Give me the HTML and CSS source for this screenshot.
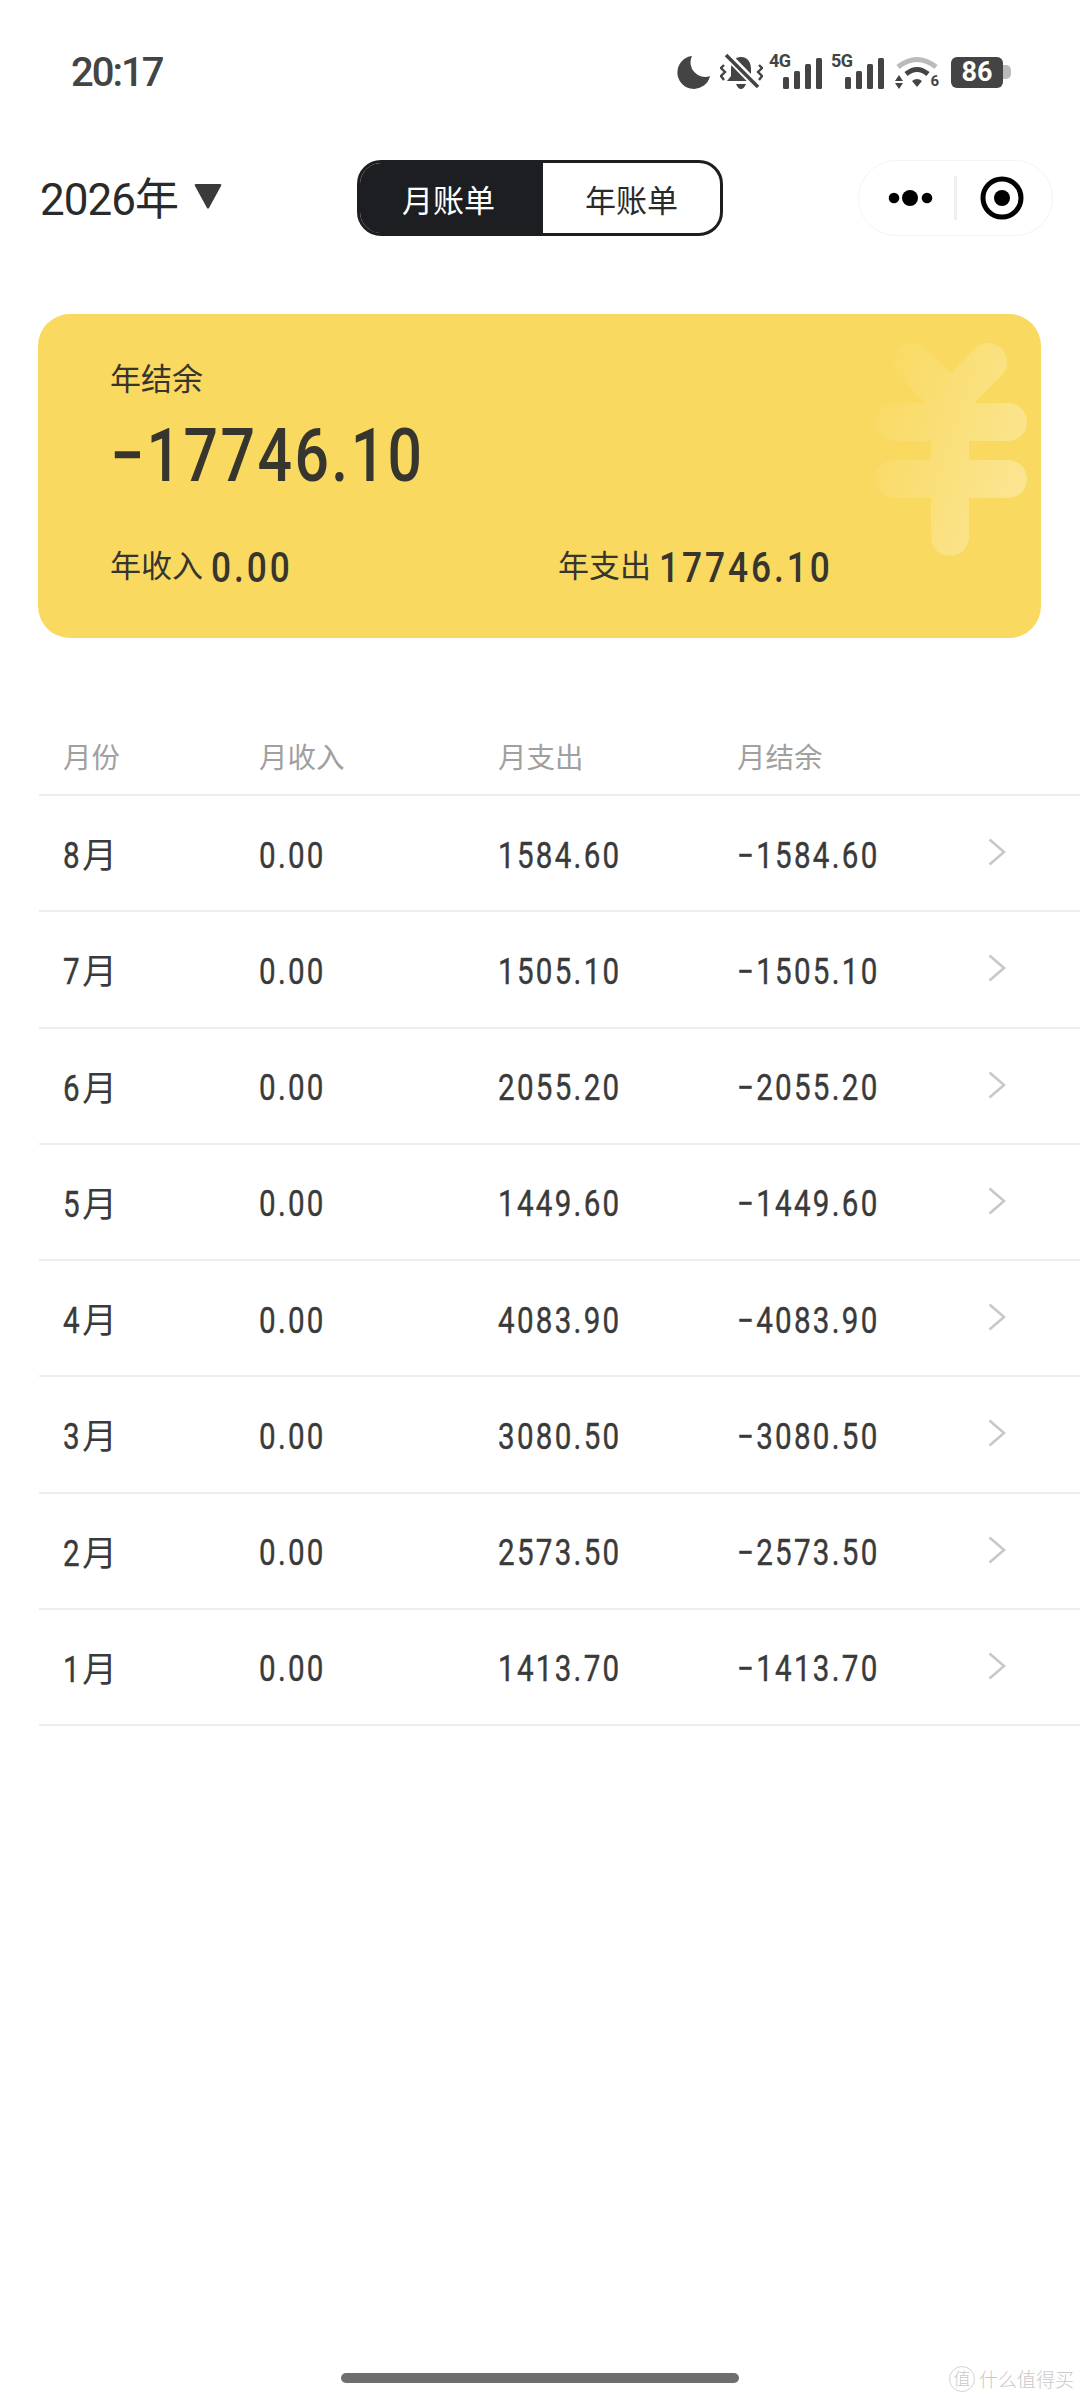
FILE: index.html
```html
<!DOCTYPE html>
<html lang="zh-CN">
<head>
    <meta charset="UTF-8">
    <meta name="viewport" content="width=device-width, initial-scale=1.0">
    <title>年账单</title>
    <link rel="stylesheet" href="styles.css">
</head>
<body>
<div class="page">

    <div class="status">
        <span class="time">20:17</span>
        <div class="status-icons">
            <svg class="ic-moon" width="33" height="33" viewBox="0 0 33 33"><path d="M15 0 A16.5 16.5 0 1 0 33 20 A14.5 14.5 0 0 1 15 0Z" fill="#444"/></svg>
            <svg class="ic-bell" width="43" height="36" viewBox="0 0 43 36">
                <path d="M21 3C14 3 11 9 11 15V22L7 27H35L31 22V15C31 9 28 3 21 3Z" fill="#444"/>
                <path d="M16 30H26Q24 35 21 35Q18 35 16 30Z" fill="#444"/>
                <path d="M5 -1L39 34" stroke="#fff" stroke-width="8"/>
                <path d="M6 1L38 33" stroke="#444" stroke-width="3.5"/>
                <path d="M4 11L1 14L5 18L1 22L4 26M39 11L42 14L38 18L42 22L39 26" fill="none" stroke="#444" stroke-width="2.4"/>
            </svg>
            <div class="signal">
                <span class="net">4G</span>
                <svg width="54" height="36" viewBox="0 0 54 36">
                    <rect x="14" y="23" width="6" height="12" rx="1.5"/>
                    <rect x="25" y="17" width="6" height="18" rx="1.5"/>
                    <rect x="36" y="10" width="6" height="25" rx="1.5"/>
                    <rect x="47" y="4" width="6" height="31" rx="1.5"/>
                </svg>
            </div>
            <div class="signal">
                <span class="net">5G</span>
                <svg width="54" height="36" viewBox="0 0 54 36">
                    <rect x="14" y="23" width="6" height="12" rx="1.5"/>
                    <rect x="25" y="17" width="6" height="18" rx="1.5"/>
                    <rect x="36" y="10" width="6" height="25" rx="1.5"/>
                    <rect x="47" y="4" width="6" height="31" rx="1.5"/>
                </svg>
            </div>
            <div class="wifi">
                <svg width="44" height="33" viewBox="0 0 44 33">
                    <path d="M3 11Q22 -4 41 11" fill="none" stroke="#bbb" stroke-width="5"/>
                    <path d="M11 18Q22 9 33 18" fill="none" stroke="#444" stroke-width="5"/>
                    <path d="M17 25Q22 21 27 25L22 31Z" fill="#444"/>
                    <path d="M0 25L4 19L8 25ZM0 27L4 33L8 27Z" fill="#444"/>
                </svg>
                <span class="wifi-num">6</span>
            </div>
            <div class="battery">
                <span class="battery-body">86</span>
                <span class="battery-cap"></span>
            </div>
        </div>
    </div>

    <div class="nav">
        <div class="year">
            <span>2026年</span>
            <svg width="28" height="25" viewBox="0 0 28 25"><path d="M1 2Q0 0 2 0H26Q28 0 27 2L15 24Q14 25 13 24Z" fill="#3b3a3a"/></svg>
        </div>
        <div class="tabs">
            <div class="tab tab-on">月账单</div>
            <div class="tab">年账单</div>
        </div>
        <div class="capsule">
            <svg width="46" height="20" viewBox="0 0 46 20">
                <circle cx="6" cy="10" r="5.3"/><circle cx="22" cy="10" r="8"/><circle cx="39" cy="10" r="5.3"/>
            </svg>
            <span class="capsule-line"></span>
            <svg class="capsule-target" width="44" height="44" viewBox="0 0 44 44">
                <circle cx="22" cy="22" r="19" fill="none" stroke="#000" stroke-width="5"/>
                <circle cx="22" cy="22" r="8"/>
            </svg>
        </div>
    </div>

    <div class="card">
        <svg class="card-yen" width="1003" height="324" viewBox="38 314 1003 324">
            <defs>
                <linearGradient id="yenfade" gradientUnits="userSpaceOnUse" x1="870" y1="420" x2="1020" y2="470">
                    <stop offset="0" stop-color="#fff" stop-opacity="0.03"/>
                    <stop offset="1" stop-color="#fff" stop-opacity="0.3"/>
                </linearGradient>
            </defs>
            <path d="M912 362L950 400L988 362M950 400V537M894 422H1008M894 479H1008" fill="none" stroke="url(#yenfade)" stroke-width="38" stroke-linecap="round" stroke-linejoin="round"/>
        </svg>
        <div class="card-label">年结余</div>
        <div class="card-amount num">−17746.10</div>
        <div class="card-stats">
            <div class="stat"><span class="stat-name">年收入</span><span class="stat-value num">0.00</span></div>
            <div class="stat"><span class="stat-name">年支出</span><span class="stat-value num">17746.10</span></div>
        </div>
    </div>

    <div class="bills">
        <div class="bill-row bill-head">
            <span>月份</span><span>月收入</span><span>月支出</span><span>月结余</span>
        </div>
        <div class="bill-row">
            <span class="month"><b class="num">8</b>月</span><span class="num">0.00</span><span class="num">1584.60</span><span class="num">−1584.60</span>
            <svg class="arrow" width="18" height="28" viewBox="0 0 18 28"><path d="M1.5 1.5L16 14L1.5 26.500"/></svg>
        </div>
        <div class="bill-row">
            <span class="month"><b class="num">7</b>月</span><span class="num">0.00</span><span class="num">1505.10</span><span class="num">−1505.10</span>
            <svg class="arrow" width="18" height="28" viewBox="0 0 18 28"><path d="M1.5 1.5L16 14L1.5 26.500"/></svg>
        </div>
        <div class="bill-row">
            <span class="month"><b class="num">6</b>月</span><span class="num">0.00</span><span class="num">2055.20</span><span class="num">−2055.20</span>
            <svg class="arrow" width="18" height="28" viewBox="0 0 18 28"><path d="M1.5 1.5L16 14L1.5 26.500"/></svg>
        </div>
        <div class="bill-row">
            <span class="month"><b class="num">5</b>月</span><span class="num">0.00</span><span class="num">1449.60</span><span class="num">−1449.60</span>
            <svg class="arrow" width="18" height="28" viewBox="0 0 18 28"><path d="M1.5 1.5L16 14L1.5 26.500"/></svg>
        </div>
        <div class="bill-row">
            <span class="month"><b class="num">4</b>月</span><span class="num">0.00</span><span class="num">4083.90</span><span class="num">−4083.90</span>
            <svg class="arrow" width="18" height="28" viewBox="0 0 18 28"><path d="M1.5 1.5L16 14L1.5 26.500"/></svg>
        </div>
        <div class="bill-row">
            <span class="month"><b class="num">3</b>月</span><span class="num">0.00</span><span class="num">3080.50</span><span class="num">−3080.50</span>
            <svg class="arrow" width="18" height="28" viewBox="0 0 18 28"><path d="M1.5 1.5L16 14L1.5 26.500"/></svg>
        </div>
        <div class="bill-row">
            <span class="month"><b class="num">2</b>月</span><span class="num">0.00</span><span class="num">2573.50</span><span class="num">−2573.50</span>
            <svg class="arrow" width="18" height="28" viewBox="0 0 18 28"><path d="M1.5 1.5L16 14L1.5 26.500"/></svg>
        </div>
        <div class="bill-row">
            <span class="month"><b class="num">1</b>月</span><span class="num">0.00</span><span class="num">1413.70</span><span class="num">−1413.70</span>
            <svg class="arrow" width="18" height="28" viewBox="0 0 18 28"><path d="M1.5 1.5L16 14L1.5 26.500"/></svg>
        </div>
    </div>

    <div class="bottom">
        <span class="home-bar"></span>
        <div class="watermark">
            <span class="watermark-logo">值</span>
            <span>什么值得买</span>
        </div>
    </div>

</div>
</body>
</html>
```

FILE: styles.css
```css
* {
    box-sizing: border-box;
}

body {
    margin: 0;
    background-color: #fff;
    font-family: Roboto, "Noto Sans CJK SC", sans-serif;
    color: #2b2b2b;
}

.page {
    width: 1080px;
    height: 2403px;
    display: flex;
    flex-direction: column;
    overflow: hidden;
}

/* the numbers are a narrow DIN style face, Roboto squeezed is the closest */
.num {
    font-weight: 500;
    transform: scaleX(0.82);
    transform-origin: left center;
    white-space: nowrap;
}

/* status bar */
.status {
    height: 144px;
    flex: none;
    display: flex;
    justify-content: space-between;
    align-items: center;
    padding: 0 69px 0 71px;
}

.time {
    font-size: 40px;
    font-weight: 500;
    letter-spacing: -2px;
    color: #444;
}

.status-icons {
    display: flex;
    align-items: center;
}

.ic-moon {
    margin-right: 10px;
}

.ic-bell {
    margin-right: 6px;
}

.signal {
    position: relative;
    width: 54px;
    height: 36px;
    margin-right: 8px;
    fill: #444;
}

.signal svg {
    display: block;
}

.net {
    position: absolute;
    left: 0;
    top: -3px;
    font-size: 18px;
    font-weight: 700;
    line-height: 20px;
    letter-spacing: -0.5px;
    color: #444;
}

.wifi {
    position: relative;
    width: 44px;
    height: 33px;
    margin-left: 2px;
    margin-right: 12px;
}

.wifi svg {
    display: block;
}

.wifi-num {
    position: absolute;
    right: 0;
    bottom: 0;
    font-size: 15px;
    font-weight: 700;
    line-height: 15px;
    color: #444;
}

.battery {
    display: flex;
    align-items: center;
}

.battery-body {
    width: 52px;
    height: 31px;
    background-color: #444;
    border-radius: 6px;
    color: #fff;
    font-size: 27px;
    font-weight: 700;
    line-height: 31px;
    text-align: center;
}

.battery-cap {
    width: 8px;
    height: 14px;
    background-color: #bbb;
    border-radius: 0 5px 5px 0;
}

/* nav row */
.nav {
    height: 108px;
    flex: none;
    display: grid;
    grid-template-columns: 1fr auto 1fr;
    align-items: center;
    padding: 0 27px;
}

.year {
    display: flex;
    align-items: center;
    gap: 16px;
    margin-left: 13px;
    margin-top: -4px;
    font-size: 44px;
    letter-spacing: -1px;
    color: #2a2a2a;
}

.tabs {
    width: 366px;
    height: 76px;
    display: flex;
    border: 3px solid #1d1e22;
    border-radius: 24px;
    overflow: hidden;
}

.tab {
    flex: 1;
    display: flex;
    align-items: center;
    justify-content: center;
    font-size: 31px;
    color: #2a2a2a;
}

.tab-on {
    flex: none;
    width: 183px;
    padding-right: 6px;
    background-color: #1d1e22;
    color: #fff;
}

.capsule {
    justify-self: end;
    width: 195px;
    height: 76px;
    display: flex;
    align-items: center;
    padding-left: 29px;
    border: 1px solid #f4f4f4;
    border-radius: 38px;
}

.capsule-line {
    width: 3px;
    height: 44px;
    margin-left: 20px;
    background-color: #efefef;
}

.capsule-target {
    margin-left: 23px;
}

/* yellow card */
.card {
    position: relative;
    flex: none;
    height: 324px;
    margin: 62px 39px 0 38px;
    padding: 46px 0 0 72px;
    background-color: #f9d95f;
    border-radius: 32px;
    color: #36352e;
    overflow: hidden;
}

.card-yen {
    position: absolute;
    left: 0;
    top: 0;
}

.card-label {
    font-size: 31px;
    line-height: 40px;
}

.card-amount {
    margin-top: 16px;
    font-size: 74px;
    line-height: 80px;
    letter-spacing: 3px;
}

.card-stats {
    display: grid;
    grid-template-columns: 448px 1fr;
    margin-top: 51px;
}

.stat {
    display: flex;
    align-items: center;
    gap: 8px;
    line-height: 40px;
}

.stat-name {
    font-size: 31px;
}

.stat-value {
    font-size: 43px;
    letter-spacing: 3.6px;
}

/* month list */
.bills {
    flex: none;
    margin: 81px 0 0 39px;
}

.bill-row {
    display: grid;
    grid-template-columns: 196px 239px 239px 251px 18px;
    align-items: center;
    height: 116.25px;
    padding-left: 24px;
    padding-top: 5px;
    border-bottom: 2px solid #eee;
    font-size: 36px;
    letter-spacing: 2.8px;
    color: #3a3a3a;
}

.bill-row .num {
    font-weight: 400;
    -webkit-text-stroke: 0.4px #3a3a3a;
}

.bill-head {
    height: 77px;
    padding-top: 0;
    padding-bottom: 3px;
    font-size: 28.500px;
    letter-spacing: 0;
    color: #a0a0a0;
}

.month {
    margin-top: -6px;
    font-size: 35px;
    letter-spacing: 0;
}

.month b {
    display: inline-block;
    width: 19px;
    font-size: 36px;
}

.arrow {
    margin-top: -7px;
}

.arrow path {
    fill: none;
    stroke: #c8c8c8;
    stroke-width: 2.6;
}

/* bottom */
.bottom {
    position: relative;
    margin-top: auto;
    height: 30px;
    flex: none;
    display: flex;
    justify-content: center;
}

.home-bar {
    width: 398px;
    height: 10px;
    background-color: #6e6e6e;
    border-radius: 5px;
}

.watermark {
    position: absolute;
    right: 6px;
    top: -8px;
    display: flex;
    align-items: center;
    gap: 4px;
    font-size: 19px;
    font-weight: 300;
    color: #c9c9c9;
}

.watermark-logo {
    width: 26px;
    height: 26px;
    border: 1px solid #d4d4d4;
    border-radius: 50%;
    font-size: 17px;
    line-height: 24px;
    text-align: center;
}
```
